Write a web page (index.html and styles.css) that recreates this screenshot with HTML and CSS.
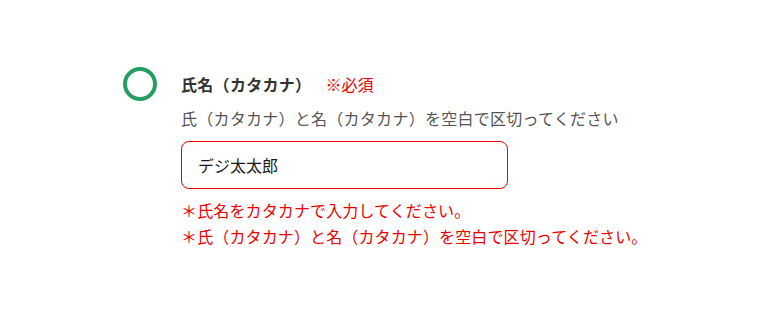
FILE: index.html
```html
<!DOCTYPE html>
<html lang="ja">
<head>
    <meta charset="UTF-8">
    <title>氏名（カタカナ）</title>
    <link rel="stylesheet" href="styles.css">
</head>
<body>
    <div class="field">
        <div class="status">
            <svg width="36" height="36" viewBox="0 0 36 36"><circle cx="18" cy="18" r="15" fill="none" stroke="#259d63" stroke-width="4"/></svg>
        </div>
        <div class="field-body">
            <div class="label">氏名（カタカナ）<span class="required">※必須</span></div>
            <div class="hint">氏（カタカナ）と名（カタカナ）を空白で区切ってください</div>
            <div class="input">デジ太太郎</div>
            <div class="errors">
                <p>＊氏名をカタカナで入力してください。</p>
                <p>＊氏（カタカナ）と名（カタカナ）を空白で区切ってください。</p>
            </div>
        </div>
    </div>
</body>
</html>
```
FILE: styles.css
```css
body {
    margin: 0;
    font-family: "Noto Sans CJK JP", "Noto Sans", sans-serif;
    background: #fff;
    color: #333;
}
.field {
    display: flex;
    padding: 66px 0 0 122px;
}
.status {
    width: 36px;
    height: 36px;
    margin-right: 23px;
}
.status svg {
    display: block;
}
.label {
    font-size: 16px;
    font-weight: bold;
    line-height: 24px;
    margin-top: 6px;
    letter-spacing: 0.3px;
    color: #333;
}
.required {
    font-weight: normal;
    color: #ec0000;
    margin-left: 14px;
    letter-spacing: 0;
}
.hint {
    font-size: 16px;
    line-height: 24px;
    margin-top: 10px;
    letter-spacing: 0.26px;
    color: #555;
}
.input {
    box-sizing: border-box;
    width: 327px;
    height: 48px;
    margin-top: 11px;
    padding: 0 16px;
    border: 1px solid #ec0000;
    border-radius: 8px;
    font-size: 16px;
    line-height: 46px;
    color: #1a1a1a;
}
.errors {
    margin-top: 8px;
    color: #ec0000;
    font-size: 16px;
    line-height: 26px;
    letter-spacing: 0.13px;
}
.errors p {
    margin: 0;
}
```
